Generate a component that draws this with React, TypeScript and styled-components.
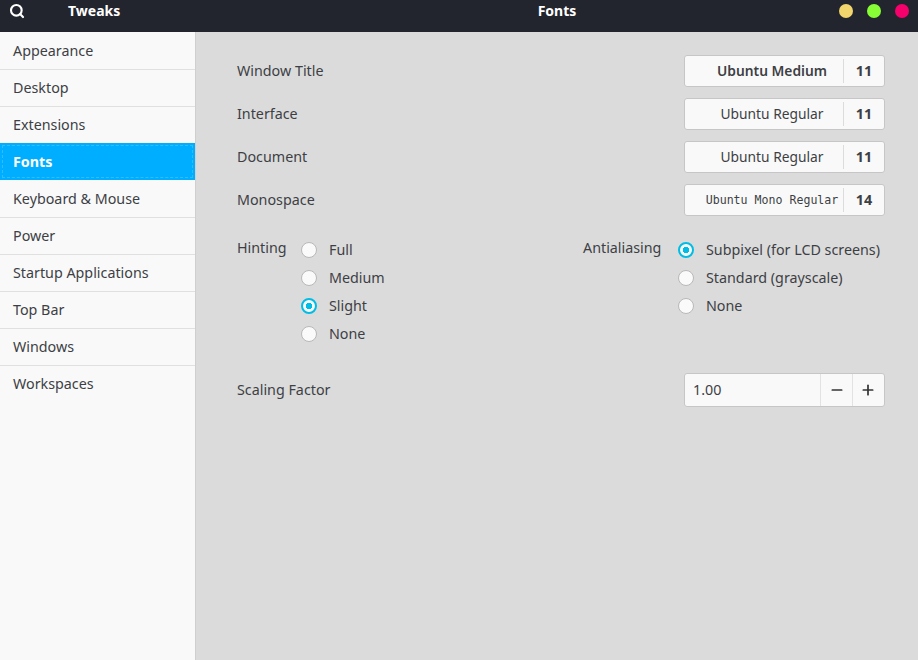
import { Search, Minus, Plus } from 'lucide-react';
import styled, { createGlobalStyle } from 'styled-components';

const sections = [
  'Appearance',
  'Desktop',
  'Extensions',
  'Fonts',
  'Keyboard & Mouse',
  'Power',
  'Startup Applications',
  'Top Bar',
  'Windows',
  'Workspaces',
];

const fontRows = [
  { label: 'Window Title', font: 'Ubuntu Medium', size: 11, kind: 'bold' },
  { label: 'Interface', font: 'Ubuntu Regular', size: 11, kind: 'regular' },
  { label: 'Document', font: 'Ubuntu Regular', size: 11, kind: 'regular' },
  { label: 'Monospace', font: 'Ubuntu Mono Regular', size: 14, kind: 'mono' },
];

const hinting = ['Full', 'Medium', 'Slight', 'None'];
const antialiasing = ['Subpixel (for LCD screens)', 'Standard (grayscale)', 'None'];

const RadioGroup = ({ options, selected }: { options: string[]; selected: string }) => (
  <RadioList>
    {options.map((option) => (
      <RadioRow key={option}>
        <RadioCircle $checked={option === selected} />
        <RadioText>{option}</RadioText>
      </RadioRow>
    ))}
  </RadioList>
);

export default function App() {
  return (
    <>
      <GlobalStyle />
      <Window>
        <HeaderBar>
          <HeaderLeft>
            <SearchButton>
              <Search size={16} strokeWidth={3.2} color="#ffffff" />
            </SearchButton>
            <AppTitle>Tweaks</AppTitle>
          </HeaderLeft>
          <PageTitle>Fonts</PageTitle>
          <WindowControls>
            <ControlDot $color="#f2d56c" />
            <ControlDot $color="#87fd35" />
            <ControlDot $color="#f6006c" />
          </WindowControls>
        </HeaderBar>
        <Body>
          <Sidebar>
            {sections.map((section) => (
              <SidebarItem key={section} $active={section === 'Fonts'}>
                {section}
              </SidebarItem>
            ))}
          </Sidebar>
          <Content>
            <FontRows>
              {fontRows.map((row) => (
                <SettingRow key={row.label}>
                  <RowLabel>{row.label}</RowLabel>
                  <FontButton>
                    <FontName $kind={row.kind}>{row.font}</FontName>
                    <FontSize>{row.size}</FontSize>
                  </FontButton>
                </SettingRow>
              ))}
            </FontRows>
            <RadioSections>
              <RadioSection $labelWidth={64}>
                <RadioLabel>Hinting</RadioLabel>
                <RadioGroup options={hinting} selected="Slight" />
              </RadioSection>
              <RadioSection $labelWidth={95}>
                <RadioLabel>Antialiasing</RadioLabel>
                <RadioGroup options={antialiasing} selected="Subpixel (for LCD screens)" />
              </RadioSection>
            </RadioSections>
            <SettingRow>
              <RowLabel>Scaling Factor</RowLabel>
              <SpinButton>
                <SpinValue>1.00</SpinValue>
                <SpinStep>
                  <Minus size={16} strokeWidth={2.6} />
                </SpinStep>
                <SpinStep>
                  <Plus size={16} strokeWidth={2.6} />
                </SpinStep>
              </SpinButton>
            </SettingRow>
          </Content>
        </Body>
      </Window>
    </>
  );
}

const GlobalStyle = createGlobalStyle`
  html, body {
    margin: 0;
    padding: 0;
    background: #dbdbdb;
  }
`;

const Window = styled.div`
  width: 918px;
  height: 660px;
  display: flex;
  flex-direction: column;
  overflow: hidden;
  font-family: 'Noto Sans', 'Open Sans', sans-serif;
  font-size: 14.3px;
  color: #3d3f45;
`;

const HeaderBar = styled.header`
  height: 32px;
  flex-shrink: 0;
  display: grid;
  grid-template-columns: 196px 1fr 100px;
  align-items: center;
  background: #23252e;
  color: #ffffff;
  font-size: 14px;
  font-weight: 700;
`;

const HeaderLeft = styled.div`
  display: flex;
  align-items: center;
  height: 100%;
  margin-top: -11px;
`;

const SearchButton = styled.div`
  width: 16px;
  height: 16px;
  margin-left: 9px;
  display: flex;
`;

const AppTitle = styled.span`
  margin-left: 43px;
`;

const PageTitle = styled.span`
  margin-top: -11px;
  padding-left: 100px;
  text-align: center;
`;

const WindowControls = styled.div`
  display: flex;
  justify-content: flex-end;
  gap: 14px;
  padding-right: 9px;
  margin-top: -11px;
`;

const ControlDot = styled.span<{ $color: string }>`
  width: 14px;
  height: 14px;
  border-radius: 50%;
  background: ${({ $color }) => $color};
`;

const Body = styled.div`
  flex: 1;
  display: flex;
  min-height: 0;
`;

const Sidebar = styled.nav`
  width: 196px;
  box-sizing: border-box;
  flex-shrink: 0;
  padding-top: 1px;
  background: #f9f9f9;
  border-right: 1px solid #cfcfcf;
`;

const SidebarItem = styled.div<{ $active: boolean }>`
  height: 37px;
  box-sizing: border-box;
  padding: ${({ $active }) => ($active ? '1px 13px 0' : '0 13px 1px')};
  margin: ${({ $active }) => ($active ? '-1px 0 1px' : '0')};
  display: flex;
  align-items: center;
  border-bottom: 1px solid ${({ $active }) => ($active ? '#00aeff' : '#e0e0e0')};
  background: ${({ $active }) => ($active ? '#00aeff' : 'transparent')};
  color: ${({ $active }) => ($active ? '#ffffff' : '#3d3f45')};
  font-weight: ${({ $active }) => ($active ? 700 : 400)};
  outline: ${({ $active }) => ($active ? '1px dashed rgba(255, 255, 255, 0.18)' : 'none')};
  outline-offset: -3px;

  &:last-child {
    border-bottom-color: transparent;
  }
`;

const Content = styled.main`
  flex: 1;
  padding: 23px 33px 0 41px;
  display: flex;
  flex-direction: column;
`;

const FontRows = styled.div`
  display: flex;
  flex-direction: column;
  gap: 11px;
`;

const SettingRow = styled.div`
  display: flex;
  align-items: center;
  justify-content: space-between;
`;

const RowLabel = styled.span`
  padding-bottom: 2px;
`;

const FontButton = styled.div`
  width: 201px;
  height: 32px;
  box-sizing: border-box;
  display: flex;
  align-items: center;
  background: #f9f9f9;
  border: 1px solid #c6c6c6;
  border-radius: 3px;
`;

const FontName = styled.span<{ $kind: string }>`
  flex: 1;
  padding-left: 16px;
  padding-bottom: ${({ $kind }) => ($kind === 'mono' ? '0' : '2px')};
  text-align: center;
  white-space: nowrap;
  font-weight: ${({ $kind }) => ($kind === 'bold' ? 600 : 400)};
  font-family: ${({ $kind }) => ($kind === 'mono' ? "'DejaVu Sans Mono', monospace" : 'inherit')};
  font-size: ${({ $kind }) => ($kind === 'mono' ? '11.6px' : '13.8px')};
`;

const FontSize = styled.span`
  width: 41px;
  height: 24px;
  box-sizing: border-box;
  flex-shrink: 0;
  padding-bottom: 2px;
  display: flex;
  align-items: center;
  justify-content: center;
  border-left: 1px solid #dcdcdc;
  font-weight: 700;
`;

const RadioSections = styled.div`
  display: grid;
  grid-template-columns: 346px 1fr;
  margin-top: 24px;
  margin-bottom: 29px;
`;

const RadioSection = styled.div<{ $labelWidth: number }>`
  display: grid;
  grid-template-columns: ${({ $labelWidth }) => $labelWidth}px 1fr;
`;

const RadioLabel = styled.span`
  line-height: 20px;
  margin-top: -2px;
`;

const RadioList = styled.div`
  display: flex;
  flex-direction: column;
  gap: 8px;
`;

const RadioRow = styled.div`
  height: 20px;
  display: flex;
  align-items: center;
  gap: 12px;
  white-space: nowrap;
`;

const RadioText = styled.span`
  padding-bottom: 2px;
`;

const RadioCircle = styled.span<{ $checked: boolean }>`
  width: 16px;
  height: 16px;
  box-sizing: border-box;
  flex-shrink: 0;
  border-radius: 50%;
  border: ${({ $checked }) => ($checked ? '2px solid #00bde6' : '1px solid #b8b8b8')};
  background: ${({ $checked }) =>
    $checked ? 'radial-gradient(circle, #00bde6 0 3px, #fafafa 3.5px)' : '#fafafa'};
`;

const SpinButton = styled.div`
  width: 201px;
  height: 34px;
  box-sizing: border-box;
  display: flex;
  background: #f9f9f9;
  border: 1px solid #c6c6c6;
  border-radius: 3px;
`;

const SpinValue = styled.span`
  flex: 1;
  padding: 0 0 2px 8px;
  display: flex;
  align-items: center;
`;

const SpinStep = styled.span`
  width: 32px;
  box-sizing: border-box;
  display: flex;
  align-items: center;
  justify-content: center;
  border-left: 1px solid #e2e2e2;
  color: #333333;

  &:last-child {
    padding-right: 1px;
  }
`;
